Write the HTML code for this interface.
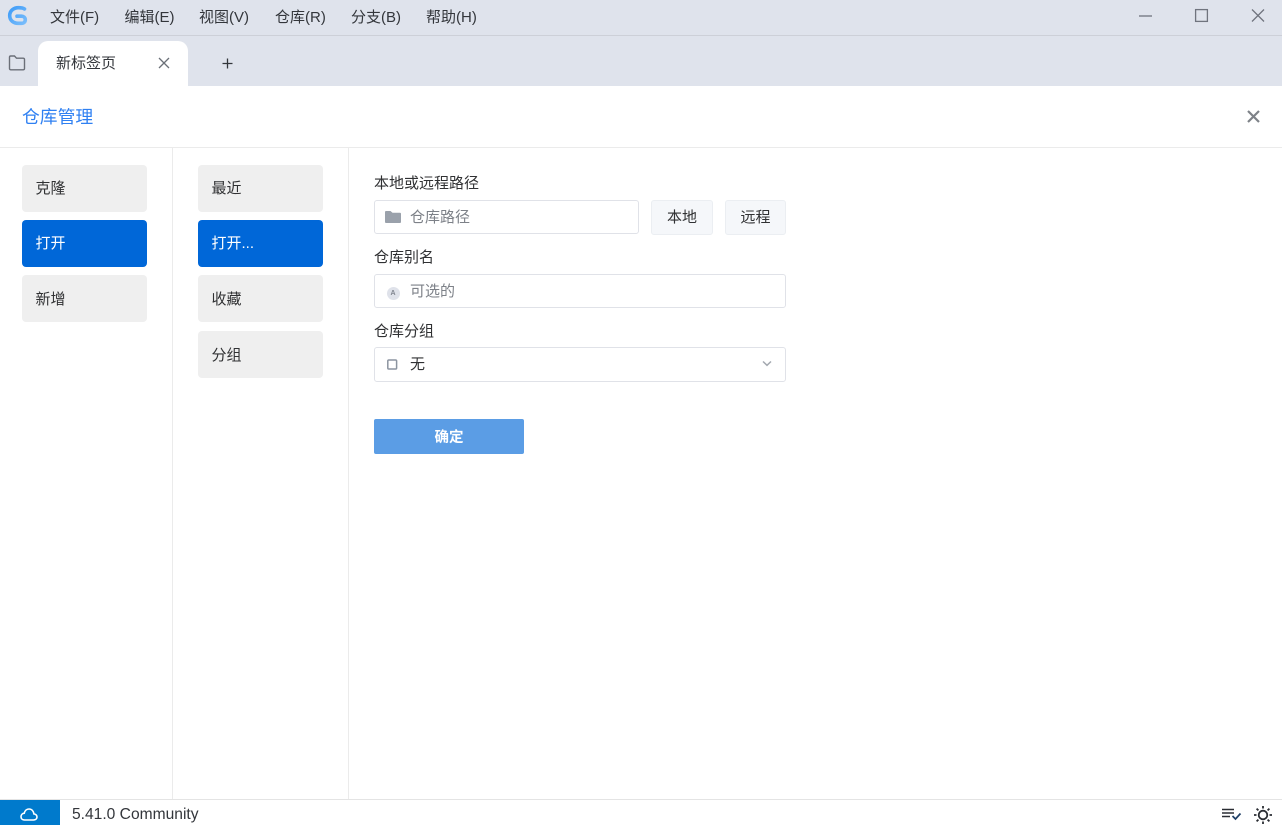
<!DOCTYPE html>
<html lang="zh-CN"><head><meta charset="utf-8"><title>GitKraken</title>
<style>
*{box-sizing:border-box;margin:0;padding:0}
html,body{width:1282px;height:825px;overflow:hidden;background:#fff}
body{position:relative;font-family:"Liberation Sans","Noto Sans CJK SC",sans-serif;font-size:15px;color:#303133}
.a{position:absolute}
.t{position:absolute;white-space:nowrap;line-height:20px;height:20px}
.menu{top:8px;font-size:15px;color:#33363b}
.side{position:absolute;width:125px;height:47px;background:#efefef;border-radius:4px;padding-left:13.5px;line-height:47px;color:#303133}
.side.on{background:#0067d8;color:#fff}
.inp{position:absolute;background:#fff;border:1px solid #e0e2e8;border-radius:3px}
.btn{position:absolute;top:200px;height:35px;background:#f5f7fa;border:1px solid #ebeef2;border-radius:3px;text-align:center;line-height:33px;color:#303133}
svg{position:absolute;overflow:visible}
</style></head><body>
<div class="a" style="left:0;top:0;width:1282px;height:86px;background:#dfe3ec"></div>
<div class="a" style="left:0;top:35px;width:1282px;height:1px;background:#cdd0d8"></div>

<svg style="left:7px;top:5px" width="22" height="22" viewBox="0 0 22 22">
<defs><linearGradient id="g" x1="0" y1="0" x2="1" y2="1"><stop offset="0" stop-color="#3f9cf8"/><stop offset="1" stop-color="#79bdfb"/></linearGradient></defs>
<path d="M17.500 4C16 3 14 2.700 11.500 2.700C6.500 2.700 2.700 6 2.700 10.500C2.700 15.500 6.500 18.300 11 18.300H14.500C16.800 18.300 18.300 16.800 18.300 14.700C18.300 12.500 16.500 11.200 14.500 11.200H10" fill="none" stroke="url(#g)" stroke-width="3.600" stroke-linecap="round"/>
</svg>

<div class="t menu" style="left:50px">文件(F)</div>
<div class="t menu" style="left:124.500px">编辑(E)</div>
<div class="t menu" style="left:199px">视图(V)</div>
<div class="t menu" style="left:275px">仓库(R)</div>
<div class="t menu" style="left:351px">分支(B)</div>
<div class="t menu" style="left:426px">帮助(H)</div>

<svg style="left:1120px;top:0" width="162" height="36" viewBox="0 0 162 36" fill="none" stroke="#70747e" stroke-width="1.300">
<path d="M19 16H32"/>
<rect x="75.600" y="9.600" width="11.800" height="11.800"/>
<path d="M132 9.500L144 21.500M144 9.500L132 21.500"/>
</svg>

<svg style="left:8px;top:54px" width="18" height="18" viewBox="0 0 18 18" fill="none" stroke="#6b6f78" stroke-width="1.400">
<path d="M1.500 3.200Q1.500 2 2.700 2H6.500L8.500 4.200H15Q16.500 4.200 16.500 5.500V14.500Q16.500 15.800 15 15.800H3Q1.500 15.800 1.500 14.500Z"/>
</svg>

<div class="a" style="left:38px;top:41px;width:150px;height:45px;background:#fff;border-radius:10px 10px 0 0"></div>
<div class="t" style="left:56px;top:54px;color:#33363b">新标签页</div>
<svg style="left:158px;top:57px" width="12" height="12" viewBox="0 0 12 12" fill="none" stroke="#6b7078" stroke-width="1.300"><path d="M1 1L11 11M11 1L1 11"/></svg>
<svg style="left:222px;top:58px" width="11" height="11" viewBox="0 0 11 11" fill="none" stroke="#33363b" stroke-width="1.300"><path d="M5.500 0.500V10.500M0.500 5.500H10.500"/></svg>

<div class="t" style="left:22px;top:105px;font-size:17.800px;line-height:24px;height:24px;color:#2f80f2;">仓库管理</div>
<svg style="left:1247px;top:110px" width="13" height="13" viewBox="0 0 13 13" fill="none" stroke="#7e8288" stroke-width="2.200"><path d="M1 1L12 12M12 1L1 12"/></svg>

<div class="a" style="left:0;top:147px;width:1282px;height:1px;background:#ebebeb"></div>
<div class="a" style="left:172px;top:148px;width:1px;height:651px;background:#ebebeb"></div>
<div class="a" style="left:348px;top:148px;width:1px;height:651px;background:#ebebeb"></div>

<div class="side" style="left:22px;top:165px">克隆</div>
<div class="side on" style="left:22px;top:220px">打开</div>
<div class="side" style="left:22px;top:275px;line-height:49px">新增</div>

<div class="side" style="left:198px;top:165px">最近</div>
<div class="side on" style="left:198px;top:220px">打开...</div>
<div class="side" style="left:198px;top:275px;line-height:49px">收藏</div>
<div class="side" style="left:198px;top:331px;line-height:49px">分组</div>

<div class="t" style="left:374px;top:174px">本地或远程路径</div>
<div class="inp" style="left:374px;top:200px;width:265px;height:34px"></div>
<svg style="left:385px;top:211px" width="16" height="12" viewBox="0 0 16 12"><path d="M0 1Q0 0 1 0H5.500L7.500 1.800H15Q16 1.800 16 2.800V11Q16 12 15 12H1Q0 12 0 11Z" fill="#9aa1ab"/></svg>
<div class="t" style="left:410px;top:208px;color:#7d8188">仓库路径</div>
<div class="btn" style="left:651px;width:62px">本地</div>
<div class="btn" style="left:725px;width:61px">远程</div>

<div class="t" style="left:374px;top:248px">仓库别名</div>
<div class="inp" style="left:374px;top:274px;width:412px;height:34px"></div>
<div class="a" style="left:386.500px;top:286.500px;width:13px;height:13px;border-radius:50%;background:#dfe2ea;color:#80858f;font-size:7px;line-height:13px;text-align:center;font-weight:bold">A</div>
<div class="t" style="left:410px;top:282px;color:#7d8188">可选的</div>

<div class="t" style="left:374px;top:322px">仓库分组</div>
<div class="inp" style="left:374px;top:347px;width:412px;height:35px"></div>
<svg style="left:387px;top:359px" width="10" height="11" viewBox="0 0 10 11" fill="none"><rect x="0.800" y="1" width="8.800" height="9" rx="1" stroke="#8c94a0" stroke-width="1.500"/></svg>
<div class="t" style="left:410px;top:355px">无</div>
<svg style="left:762px;top:360px" width="10" height="7" viewBox="0 0 10 7" fill="none" stroke="#a3a8b0" stroke-width="1.500"><path d="M1 1.500L5 5.300L9 1.500"/></svg>

<div class="a" style="left:374px;top:419px;width:150px;height:35px;background:#5b9de5;border-radius:2px;color:#fff;text-align:center;line-height:38px;font-weight:bold;font-size:14.500px">确定</div>

<div class="a" style="left:0;top:799px;width:1282px;height:1px;background:#e4e4e4"></div>
<div class="a" style="left:0;top:800px;width:60px;height:25px;background:#007acc"></div>
<svg style="left:20px;top:808px" width="18" height="13" viewBox="0 0 18 13" fill="none" stroke="#fff" stroke-width="1.600"><path d="M4.500 12H13.500C15.500 12 17 10.700 17 9C17 7.200 15.500 6 14 6C13.500 3 11.500 1 9 1C6.500 1 4.800 2.800 4.300 5.200C2.500 5.400 1 6.800 1 8.600C1 10.600 2.500 12 4.500 12Z"/></svg>
<div class="t" style="left:72px;top:805px;font-size:15.600px;color:#33363b">5.41.0 Community</div>

<svg style="left:1222px;top:808px" width="19" height="13" viewBox="0 0 19 13" fill="none" stroke="#2a2d33" stroke-width="1.500">
<path d="M0 1.500H12M0 5H12M0 8.500H8"/><path d="M10.500 8L13.500 11L18.500 5.500" stroke="#1f3f66" stroke-width="1.700"/>
</svg>
<svg style="left:1254px;top:806px" width="18" height="18" viewBox="0 0 18 18" fill="none" stroke="#2a2d33" stroke-width="1.800">
<circle cx="9" cy="9" r="4.300"/>
<path d="M9 0V2.500M9 15.500V18M0 9H2.500M15.500 9H18M2.600 2.600L4.400 4.400M13.600 13.600L15.400 15.400M15.400 2.600L13.600 4.400M4.400 13.600L2.600 15.400"/>
</svg>
</body></html>
